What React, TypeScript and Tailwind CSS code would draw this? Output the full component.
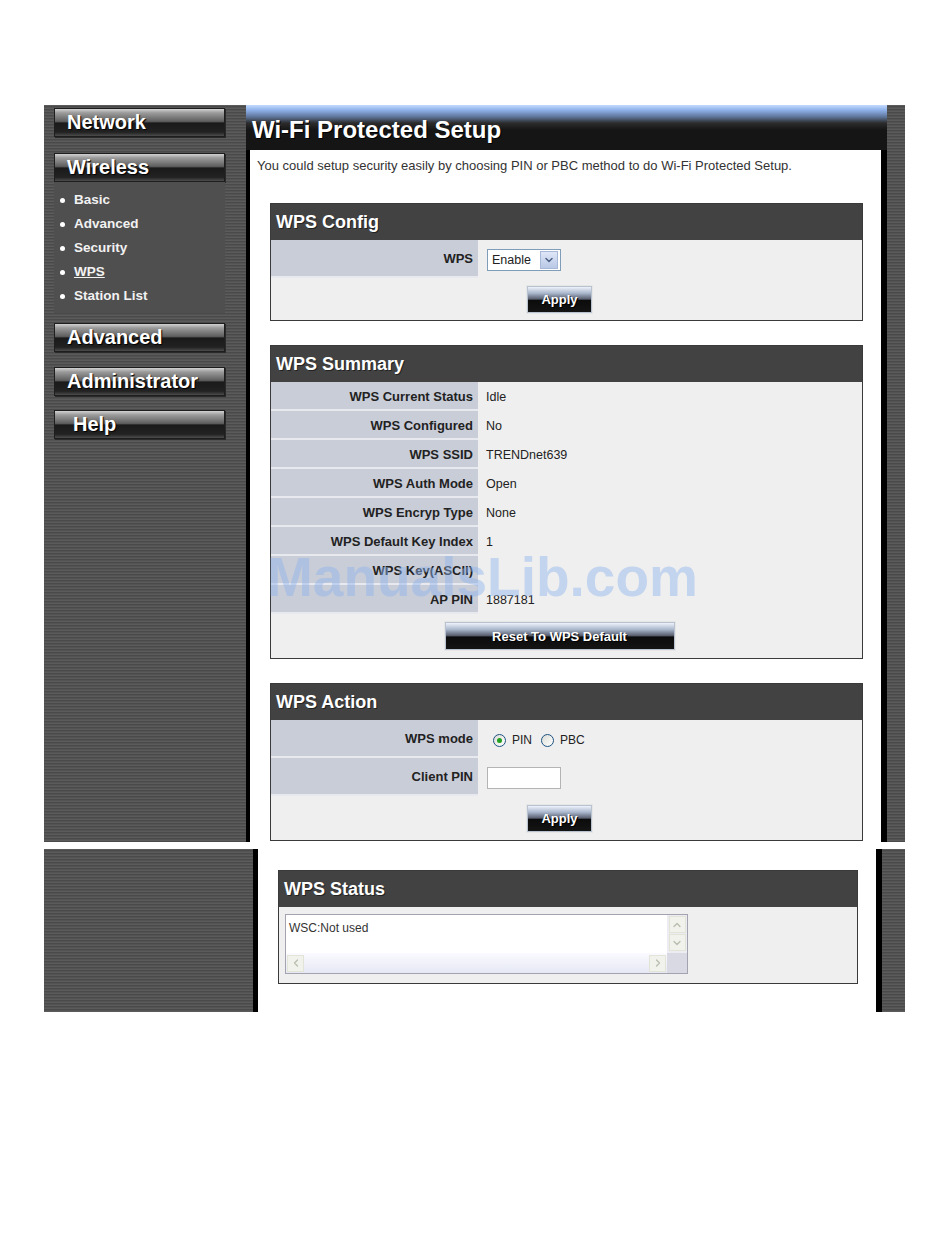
import React from 'react';
import { ChevronUp, ChevronDown, ChevronLeft, ChevronRight } from 'lucide-react';

const stripe =
  'bg-[repeating-linear-gradient(180deg,#5b5b5b_0px,#5b5b5b_1px,#4a4a4a_1px,#4a4a4a_2px,#535353_2px,#535353_3px)]';

const wirelessLinks = ['Basic', 'Advanced', 'Security', 'WPS', 'Station List'];

const summary: [string, string][] = [
  ['WPS Current Status', 'Idle'],
  ['WPS Configured', 'No'],
  ['WPS SSID', 'TRENDnet639'],
  ['WPS Auth Mode', 'Open'],
  ['WPS Encryp Type', 'None'],
  ['WPS Default Key Index', '1'],
  ['WPS Key(ASCII)', ''],
  ['AP PIN', '1887181'],
];

function NavButton({ label, indent }: { label: string; indent?: boolean }) {
  return (
    <div
      className={
        'h-[29px] w-[171px] border border-[#1e1e1e] bg-[linear-gradient(180deg,#d2d2d2_0%,#9c9c9c_14%,#5e5e5e_46%,#1a1a1a_52%,#222_86%,#4c4c4c_100%)] flex items-center pb-[2px] text-white font-bold text-[20px] leading-none [text-shadow:1px_1px_1px_#000] shadow-[1px_1px_0_#2a2a2a] ' +
        (indent ? 'pl-[18px]' : 'pl-[12px]')
      }
    >
      {label}
    </div>
  );
}

function GlossButton({ label, wide }: { label: string; wide?: boolean }) {
  return (
    <button
      type="button"
      className={
        'border border-[#b9c2cf] bg-[linear-gradient(180deg,#eef3fb_0%,#a9b6cc_25%,#5a6070_48%,#0c0c0c_54%,#141414_100%)] text-white font-bold text-[13px] leading-none [text-shadow:1px_1px_0_#000] shadow-[0_0_0_1px_#e6e6e6] ' +
        (wide ? 'w-[230px] h-[28px]' : 'w-[65px] h-[27px]')
      }
    >
      {label}
    </button>
  );
}

function Box({ title, children }: { title: string; children: React.ReactNode }) {
  return (
    <div className="border border-[#3a3a3a] bg-[#efefef]">
      <div className="h-[36px] bg-[#424242] flex items-center pl-[5px] text-white font-bold text-[18px] [text-shadow:1px_1px_0_#222]">
        {title}
      </div>
      {children}
    </div>
  );
}

function Row({ label, tall, children }: { label: string; tall?: boolean; children?: React.ReactNode }) {
  return (
    <div className="flex">
      <div
        className={
          'w-[207px] shrink-0 bg-[#c9cdd8] border-b-2 border-[#e8e9ee] flex items-center justify-end pr-[5px] pt-[2px] font-bold text-[13px] text-[#222] ' +
          (tall ? 'h-[38px]' : 'h-[29px]')
        }
      >
        {label}
      </div>
      <div className="flex-1 flex items-center pl-[8px] pt-[2px] text-[12.5px] text-[#222]">{children}</div>
    </div>
  );
}

function Radio({ checked, label }: { checked?: boolean; label: string }) {
  return (
    <div className="flex items-center">
      <span className="w-[13px] h-[13px] rounded-full border border-[#1d5281] bg-[linear-gradient(135deg,#dcdcd6,#fff)] flex items-center justify-center">
        {checked && <span className="w-[5px] h-[5px] rounded-full bg-[#21a121]" />}
      </span>
      <span className="ml-[6px] text-[12px] text-[#222]">{label}</span>
    </div>
  );
}

function ScrollBtn({ children }: { children: React.ReactNode }) {
  return (
    <div className="w-[17px] h-[17px] border border-[#e2e4d8] bg-[#f1f2ec] flex items-center justify-center text-[#b7bcae]">
      {children}
    </div>
  );
}

export default function App() {
  return (
    <div className="w-[950px] h-[1260px] bg-white pt-[105px] pl-[44px] font-['Liberation_Sans',Arial,sans-serif]">
      {/* top panel */}
      <div className="flex w-[861px]">
        <div className={`w-[202px] shrink-0 ${stripe} pt-[3px] pl-[10px]`}>
          <NavButton label="Network" />
          <div className="mt-[16px]">
            <NavButton label="Wireless" />
          </div>
          <div className="w-[171px] bg-[#4f4f4f] pt-[6px] pb-[5px]">
            {wirelessLinks.map(l => (
              <div key={l} className="h-[24px] flex items-center">
                <span className="ml-[6px] w-[5px] h-[5px] rounded-full bg-white" />
                <span
                  className={
                    'ml-[9px] text-[13.5px] font-bold text-[#f2f2f2] ' + (l === 'WPS' ? 'underline' : '')
                  }
                >
                  {l}
                </span>
              </div>
            ))}
          </div>
          <div className="mt-[10px]">
            <NavButton label="Advanced" />
          </div>
          <div className="mt-[15px]">
            <NavButton label="Administrator" />
          </div>
          <div className="mt-[14px]">
            <NavButton label="Help" indent />
          </div>
        </div>

        <div className="w-[641px] shrink-0 flex flex-col">
          <div className="h-[45px] bg-[linear-gradient(180deg,#c4dbff_0px,#8fb2ea_5px,#5d7398_12px,#2c2c2c_18px,#151515_25px,#151515_45px)] flex items-end pl-[6px] pb-[6px]">
            <h1 className="text-white font-bold text-[24px] leading-[28px] [text-shadow:1px_1px_0_#000]">
              Wi-Fi Protected Setup
            </h1>
          </div>
          <div className="flex-1 bg-white border-l-[4px] border-r-[6px] border-black pt-[8px] pb-[1px]">
            <p className="pl-[7px] text-[13px] leading-[16px] text-[#333]">
              You could setup security easily by choosing PIN or PBC method to do Wi-Fi Protected Setup.
            </p>
            <div className="mt-[29px] ml-[20px] mr-[18px] flex flex-col gap-[24px]">
              <Box title="WPS Config">
                <Row label="WPS" tall>
                  <div className="ml-[1px] w-[74px] h-[22px] border border-[#7f9db9] bg-white flex items-center justify-between pl-[4px] pr-[2px]">
                    <span className="text-[12.5px] text-[#222]">Enable</span>
                    <span className="w-[18px] h-[18px] border border-[#a7b8d8] bg-[linear-gradient(180deg,#dfe7f7,#b9c8e6)] flex items-center justify-center text-[#4d6185]">
                      <ChevronDown size={12} strokeWidth={3} />
                    </span>
                  </div>
                </Row>
                <div className="h-[42px] flex items-center justify-center pr-[14px]">
                  <GlossButton label="Apply" />
                </div>
              </Box>

              <div className="relative">
                <Box title="WPS Summary">
                  {summary.map(([k, v]) => (
                    <Row key={k} label={k}>
                      {v}
                    </Row>
                  ))}
                  <div className="h-[44px] flex items-center justify-center pr-[14px]">
                    <GlossButton label="Reset To WPS Default" wide />
                  </div>
                </Box>
                <div className="absolute left-[-3px] top-[204px] text-[55px] leading-[56px] font-bold text-[#8db3ee]/45 pointer-events-none">
                  ManualsLib.com
                </div>
              </div>

              <Box title="WPS Action">
                <Row label="WPS mode" tall>
                  <div className="ml-[7px] flex items-center gap-[9px]">
                    <Radio checked label="PIN" />
                    <Radio label="PBC" />
                  </div>
                </Row>
                <Row label="Client PIN" tall>
                  <div className="ml-[1px] w-[74px] h-[22px] border border-[#b4b4b4] bg-white" />
                </Row>
                <div className="h-[44px] flex items-center justify-center pr-[14px]">
                  <GlossButton label="Apply" />
                </div>
              </Box>
            </div>
          </div>
        </div>

        <div className={`w-[18px] shrink-0 ${stripe}`} />
      </div>

      {/* bottom panel */}
      <div className="mt-[7px] flex w-[861px] h-[163px]">
        <div className={`w-[209px] shrink-0 ${stripe}`} />
        <div className="w-[5px] shrink-0 bg-black" />
        <div className="w-[618px] shrink-0 bg-white pt-[21px] pl-[20px] pr-[18px]">
          <Box title="WPS Status">
            <div className="pt-[7px] pb-[9px] pl-[6px]">
              <div className="w-[403px] h-[60px] border border-[#a3a3b0] flex flex-col">
                <div className="flex h-[38px]">
                  <div className="flex-1 bg-white pl-[3px] pt-[6px] text-[12px] leading-[14px] text-[#333]">
                    WSC:Not used
                  </div>
                  <div className="w-[20px] bg-[#ececf2] flex flex-col items-center pt-[1px] gap-[1px]">
                    <ScrollBtn>
                      <ChevronUp size={12} strokeWidth={2.5} />
                    </ScrollBtn>
                    <ScrollBtn>
                      <ChevronDown size={12} strokeWidth={2.5} />
                    </ScrollBtn>
                  </div>
                </div>
                <div className="flex h-[20px]">
                  <div className="flex-1 flex items-center bg-[linear-gradient(180deg,#fafaff,#e6e8f4)] px-[1px]">
                    <ScrollBtn>
                      <ChevronLeft size={12} strokeWidth={2.5} />
                    </ScrollBtn>
                    <div className="flex-1" />
                    <ScrollBtn>
                      <ChevronRight size={12} strokeWidth={2.5} />
                    </ScrollBtn>
                  </div>
                  <div className="w-[20px] bg-[#d9d9e4]" />
                </div>
              </div>
            </div>
          </Box>
        </div>
        <div className="w-[6px] shrink-0 bg-black" />
        <div className={`w-[23px] shrink-0 ${stripe}`} />
      </div>
    </div>
  );
}
